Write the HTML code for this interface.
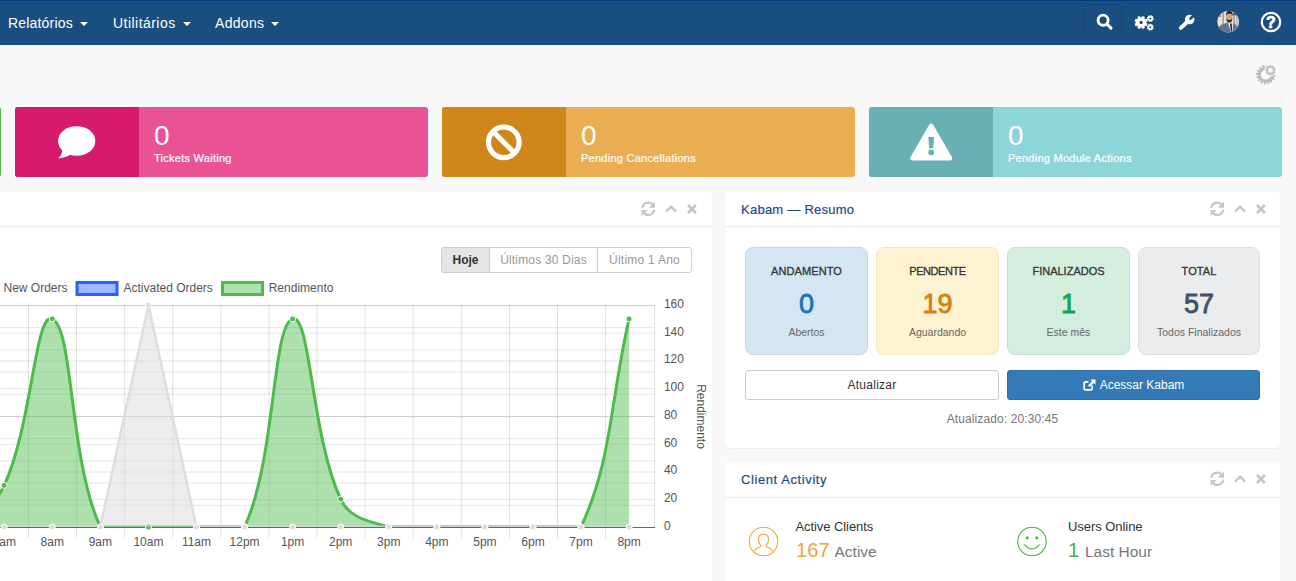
<!DOCTYPE html>
<html lang="pt-BR">
<head>
<meta charset="utf-8">
<title>WHMCS - Dashboard</title>
<style>
*{box-sizing:border-box;margin:0;padding:0}
html,body{width:1296px;height:581px;overflow:hidden;background:#f8f8f8;font-family:"Liberation Sans",sans-serif;color:#333}
.abs{position:absolute}
/* navbar */
.nav{position:absolute;left:0;top:0;width:1296px;height:45px;background:#1a4d80;border-top:1px solid #003d80}
.nav .mi{position:absolute;top:12px;color:#fff;font-size:14px;line-height:20px;white-space:nowrap}
.caret{position:absolute;top:21px;width:0;height:0;border-left:4px solid transparent;border-right:4px solid transparent;border-top:4px solid #fff}
.nav svg{position:absolute}
.sbox{position:absolute;left:1084px;top:4px;width:38px;height:31px;border:1px solid rgba(0,0,0,.07);border-bottom:none}
/* tiles */
.tile{position:absolute;top:107px;height:70px;border-radius:3px;overflow:hidden;color:#fff}
.tile .ic{position:absolute;left:0;top:0;width:124px;height:70px}
.tile .num{position:absolute;left:139px;top:15px;font-size:28px;line-height:28px;white-space:nowrap}
.tile .lab{position:absolute;left:139px;top:44px;font-size:11px;line-height:14px;white-space:nowrap;-webkit-text-stroke:.2px #fff}
.tile svg{position:absolute;left:0;top:0}
/* panels */
.panel{position:absolute;background:#fff;border-radius:4px;box-shadow:0 1px 1px rgba(0,0,0,.05)}
.ph{position:absolute;left:0;right:0;top:0;height:35px;border-bottom:1px solid #ececec}
.ph .t{position:absolute;left:16px;top:9.5px;-webkit-text-stroke:.2px #1a4d80;font-size:13px;line-height:16px;color:#1a4d80;white-space:nowrap}
.ph svg{position:absolute}
/* button group */
.bg{position:absolute;left:441px;top:247px;height:26px;width:251px;font-size:12px}
.bg div{position:absolute;top:0;height:26px;border:1px solid #ccc;background:#fff;color:#999;line-height:24px;text-align:center;white-space:nowrap}
.bg .a{background:#e6e6e6;color:#333;font-weight:bold;border-color:#ccc;border-radius:3px 0 0 3px}
/* kabam boxes */
.kb{position:absolute;top:247px;width:123px;height:108px;border-radius:8px;border:1px solid;text-align:center}
.kb .h{position:absolute;left:0;right:0;top:16px;font-size:11px;line-height:14px;font-weight:normal;-webkit-text-stroke:.3px #333;color:#333;white-space:nowrap}
.kb .n{position:absolute;left:0;right:0;top:41px;font-size:27px;line-height:30px;font-weight:normal;-webkit-text-stroke:.8px;white-space:nowrap}
.kb .s{position:absolute;left:0;right:0;top:76.7px;font-size:10.5px;line-height:14px;color:#666;white-space:nowrap}
.btn{position:absolute;top:370px;height:30px;border-radius:3px;font-size:12px;line-height:28px;text-align:center;border:1px solid #ccc;background:#fff;color:#333;white-space:nowrap}
.btn.p{background:#337ab7;border-color:#2e6da4;color:#fff}
.upd{position:absolute;left:745px;width:515px;top:410.5px;letter-spacing:.11px;text-align:center;font-size:12px;line-height:16px;color:#777;white-space:nowrap}
.ca .l1{position:absolute;font-size:13px;line-height:16px;color:#333;white-space:nowrap}
.ca .l2{position:absolute;font-size:15.5px;line-height:22px;color:#777;white-space:nowrap}
.ca .l2 b{font-weight:normal;font-size:20px;letter-spacing:.1px;margin-right:1.4px}
</style>
</head>
<body>
<!-- NAVBAR -->
<div class="nav">
  <span class="mi" style="left:8px;letter-spacing:.18px">Relatórios</span><i class="caret" style="left:80px"></i>
  <span class="mi" style="left:113px;letter-spacing:.46px">Utilitários</span><i class="caret" style="left:183px"></i>
  <span class="mi" style="left:215px;letter-spacing:.3px">Addons</span><i class="caret" style="left:271px"></i>
  <div class="sbox"></div>
  <!-- search -->
  <svg style="left:1096px;top:11.5px" width="18" height="18" viewBox="0 0 18 18"><circle cx="7.1" cy="7.2" r="5.05" fill="none" stroke="#fff" stroke-width="2.8"/><path d="M10.9 11 L15 15.1" stroke="#fff" stroke-width="3" stroke-linecap="round"/></svg>
  <!-- cogs -->
  <svg style="left:1132px;top:12px" width="24" height="20" viewBox="1132 13 24 20">
    <path d="M1146.19 22.82 L1147.68 23.76 L1146.64 26.27 L1144.93 25.87 L1144.47 26.33 L1144.87 28.04 L1142.36 29.08 L1141.42 27.59 L1140.78 27.59 L1139.84 29.08 L1137.33 28.04 L1137.73 26.33 L1137.27 25.87 L1135.56 26.27 L1134.52 23.76 L1136.01 22.82 L1136.01 22.18 L1134.52 21.24 L1135.56 18.73 L1137.27 19.13 L1137.73 18.67 L1137.33 16.96 L1139.84 15.92 L1140.78 17.41 L1141.42 17.41 L1142.36 15.92 L1144.87 16.96 L1144.47 18.67 L1144.93 19.13 L1146.64 18.73 L1147.68 21.24 L1146.19 22.18Z M1142.80 22.50 A1.70 1.70 0 1 0 1139.40 22.50 A1.70 1.70 0 1 0 1142.80 22.50 Z" fill="#fff" fill-rule="evenodd"/>
    <path d="M1152.88 18.26 L1153.80 18.59 L1153.52 19.98 L1152.54 19.91 L1152.36 20.18 L1152.79 21.06 L1151.60 21.85 L1150.96 21.12 L1150.64 21.18 L1150.31 22.10 L1148.92 21.82 L1148.99 20.84 L1148.72 20.66 L1147.84 21.09 L1147.05 19.90 L1147.78 19.26 L1147.72 18.94 L1146.80 18.61 L1147.08 17.22 L1148.06 17.29 L1148.24 17.02 L1147.81 16.14 L1149.00 15.35 L1149.64 16.08 L1149.96 16.02 L1150.29 15.10 L1151.68 15.38 L1151.61 16.36 L1151.88 16.54 L1152.76 16.11 L1153.55 17.30 L1152.82 17.94Z M1151.30 18.60 A1.00 1.00 0 1 0 1149.30 18.60 A1.00 1.00 0 1 0 1151.30 18.60 Z" fill="#fff" fill-rule="evenodd"/>
    <path d="M1152.88 26.86 L1153.80 27.19 L1153.52 28.58 L1152.54 28.51 L1152.36 28.78 L1152.79 29.66 L1151.60 30.45 L1150.96 29.72 L1150.64 29.78 L1150.31 30.70 L1148.92 30.42 L1148.99 29.44 L1148.72 29.26 L1147.84 29.69 L1147.05 28.50 L1147.78 27.86 L1147.72 27.54 L1146.80 27.21 L1147.08 25.82 L1148.06 25.89 L1148.24 25.62 L1147.81 24.74 L1149.00 23.95 L1149.64 24.68 L1149.96 24.62 L1150.29 23.70 L1151.68 23.98 L1151.61 24.96 L1151.88 25.14 L1152.76 24.71 L1153.55 25.90 L1152.82 26.54Z M1151.30 27.20 A1.00 1.00 0 1 0 1149.30 27.20 A1.00 1.00 0 1 0 1151.30 27.20 Z" fill="#fff" fill-rule="evenodd"/>
  </svg>
  <!-- wrench -->
  <svg style="left:1174px;top:10px" width="24" height="24" viewBox="1174 11 24 24">
    <path d="M1180.9 27.9 L1188.6 20.700" stroke="#fff" stroke-width="4" stroke-linecap="round" fill="none"/>
    <circle cx="1189.700" cy="19.500" r="4.800" fill="#fff"/>
    <path d="M1190.600 18.600 L1195.500 13.700" stroke="#1a4d80" stroke-width="2.800" stroke-linecap="round" fill="none"/>
  </svg>
  <!-- avatar -->
  <svg style="left:1216px;top:9px" width="24" height="24" viewBox="1216 10 24 24">
    <defs><clipPath id="av"><circle cx="1228.200" cy="21.700" r="10.800"/></clipPath></defs>
    <g clip-path="url(#av)">
      <rect x="1216" y="10" width="24" height="24" fill="#e6e3d8"/>
      <rect x="1217" y="10" width="4" height="7" fill="#9a8a62"/>
      <rect x="1222.500" y="10" width="1.200" height="16" fill="#7d8a78"/>
      <rect x="1233" y="10" width="7" height="5.500" fill="#55624f"/>
      <rect x="1233.500" y="15.500" width="1.300" height="12" fill="#8e968c"/>
      <rect x="1236.300" y="14" width="1.300" height="13" fill="#a9aca4"/>
      <ellipse cx="1229.300" cy="17.600" rx="3.100" ry="4" fill="#cfa486"/>
      <path d="M1225.900 16.600 Q1225.600 11 1229.300 10.900 Q1233 11 1232.700 16.600 Q1232 13.600 1229.300 13.600 Q1226.600 13.600 1225.900 16.600Z" fill="#1e1a19"/>
      <path d="M1226.200 18 Q1226.500 22.700 1229.300 22.700 Q1232.100 22.700 1232.400 18 Q1231.500 20.200 1229.300 20 Q1227.100 20.200 1226.200 18Z" fill="#3a2b25"/>
      <path d="M1216 34 L1217.500 28 Q1222 24 1227.500 22.600 L1232 22.600 Q1236.500 24.500 1238.500 28.500 L1240 34Z" fill="#62728f"/>
      <path d="M1228 22.800 L1233 22.800 L1232.800 31.500 L1230.700 31.500Z" fill="#eef0f4"/>
      <path d="M1229.900 23.600 L1231.700 23.600 L1232.300 31 L1231 31.500Z" fill="#1b2748"/>
    </g>
  </svg>
  <!-- help -->
  <svg style="left:1260px;top:10.4px" width="22" height="22" viewBox="0 0 22 22"><circle cx="11" cy="11" r="9.2" fill="none" stroke="#fff" stroke-width="2.3"/><text x="11" y="16.700" text-anchor="middle" font-family="Liberation Sans, sans-serif" font-weight="bold" font-size="16" fill="#fff" stroke="#fff" stroke-width=".7">?</text></svg>
</div>

<!-- page gear -->
<svg class="abs" style="left:1254px;top:62px" width="26" height="26" viewBox="1254 62 26 26">
  <path d="M1273.48 74.11 L1275.60 74.91 L1275.44 76.44 L1273.21 76.80 L1273.12 77.09 L1274.77 78.64 L1274.04 80.00 L1271.84 79.48 L1271.65 79.71 L1272.58 81.78 L1271.39 82.75 L1269.55 81.43 L1269.28 81.57 L1269.36 83.83 L1267.88 84.28 L1266.69 82.35 L1266.39 82.38 L1265.59 84.50 L1264.06 84.34 L1263.70 82.11 L1263.41 82.02 L1261.86 83.67 L1260.50 82.94 L1261.02 80.74 L1260.79 80.55 L1258.72 81.48 L1257.75 80.29 L1259.07 78.45 L1258.93 78.18 L1256.67 78.26 L1256.22 76.78 L1258.15 75.59 L1258.12 75.29 L1256.00 74.49 L1256.16 72.96 L1258.39 72.60 L1258.48 72.31 L1256.83 70.76 L1257.56 69.40 L1259.76 69.92 L1259.95 69.69 L1259.02 67.62 L1260.21 66.65 L1262.05 67.97 L1262.32 67.83 L1262.24 65.57 L1263.72 65.12 L1264.91 67.05 L1265.21 67.02 L1266.01 64.90 L1267.54 65.06 L1267.90 67.29 L1268.19 67.38 L1269.74 65.73 L1271.10 66.46 L1270.58 68.66 L1270.81 68.85 L1272.88 67.92 L1273.85 69.11 L1272.53 70.95 L1272.67 71.22 L1274.93 71.14 L1275.38 72.62 L1273.45 73.81Z M1270.80 74.70 A5.00 5.00 0 1 0 1260.80 74.70 A5.00 5.00 0 1 0 1270.80 74.70 Z" fill="#bcbcbc" fill-rule="evenodd"/>
  <circle cx="1270.5" cy="70.3" r="6.1" fill="#f8f8f8"/>
  <path d="M1274.39 69.37 L1275.77 69.75 L1275.77 70.85 L1274.39 71.23 L1274.34 71.44 L1275.34 72.46 L1274.79 73.42 L1273.40 73.05 L1273.25 73.20 L1273.62 74.59 L1272.66 75.14 L1271.64 74.14 L1271.43 74.19 L1271.05 75.57 L1269.95 75.57 L1269.57 74.19 L1269.36 74.14 L1268.34 75.14 L1267.38 74.59 L1267.75 73.20 L1267.60 73.05 L1266.21 73.42 L1265.66 72.46 L1266.66 71.44 L1266.61 71.23 L1265.23 70.85 L1265.23 69.75 L1266.61 69.37 L1266.66 69.16 L1265.66 68.14 L1266.21 67.18 L1267.60 67.55 L1267.75 67.40 L1267.38 66.01 L1268.34 65.46 L1269.36 66.46 L1269.57 66.41 L1269.95 65.03 L1271.05 65.03 L1271.43 66.41 L1271.64 66.46 L1272.66 65.46 L1273.62 66.01 L1273.25 67.40 L1273.40 67.55 L1274.79 67.18 L1275.34 68.14 L1274.34 69.16Z M1273.00 70.30 A2.50 2.50 0 1 0 1268.00 70.30 A2.50 2.50 0 1 0 1273.00 70.30 Z" fill="#bcbcbc" fill-rule="evenodd"/>
</svg>

<!-- TILES -->
<div class="abs" style="left:-2px;top:107px;width:3px;height:70px;background:#4cbb4c;border-radius:0 3px 3px 0"></div>

<div class="tile" style="left:15px;width:413px;background:#e95395">
  <div class="ic" style="background:#d61a6c"></div>
  <svg width="124" height="70" viewBox="15 107 124 70"><ellipse cx="76.7" cy="141" rx="18.600" ry="14.8" fill="#fff"/><path d="M62 149 Q62.500 155 58.300 158.300 Q65 158.300 70.500 154.500 Z" fill="#fff"/></svg>
  <div class="num">0</div>
  <div class="lab" style="letter-spacing:.26px">Tickets Waiting</div>
</div>

<div class="tile" style="left:442px;width:413px;background:#e9ae52">
  <div class="ic" style="background:#d0871a"></div>
  <svg width="124" height="70" viewBox="442 107 124 70"><circle cx="503.800" cy="142.300" r="15.300" fill="none" stroke="#fff" stroke-width="5.2"/><path d="M493 131.500 L514.600 153.100" stroke="#fff" stroke-width="5" fill="none"/></svg>
  <div class="num">0</div>
  <div class="lab" style="letter-spacing:.26px">Pending Cancellations</div>
</div>

<div class="tile" style="left:869px;width:413px;background:#8ed5d9">
  <div class="ic" style="background:#68b0b4"></div>
  <svg width="124" height="70" viewBox="869 107 124 70"><path d="M931.200 126 L950 158.300 L912.400 158.300 Z" fill="#fff" stroke="#fff" stroke-width="4.600" stroke-linejoin="round"/><path d="M928.400 137 L934 137 L933.300 148.200 L929.100 148.200 Z" fill="#68b0b4"/><circle cx="931.200" cy="152.400" r="2.900" fill="#68b0b4"/></svg>
  <div class="num">0</div>
  <div class="lab" style="letter-spacing:.26px">Pending Module Actions</div>
</div>

<!-- LEFT PANEL (chart) -->
<div class="panel" style="left:-20px;top:192px;width:732px;height:420px">
  <div class="ph">
    <svg style="left:660px;top:8px" width="60" height="20" viewBox="0 0 60 20"><g fill="none" stroke="#c6c6c6" stroke-width="2.2"><path d="M2.3 7.9 A6 6 0 0 1 12.9 4.9"/><path d="M14.3 9.7 A6 6 0 0 1 3.7 12.7"/></g><path d="M15 1.5 V7.7 H8.8 Z" fill="#c6c6c6"/><path d="M1.6 16.1 V9.9 H7.8 Z" fill="#c6c6c6"/><path d="M26.1 11.6 L31.1 6.6 L36.1 11.6" fill="none" stroke="#c6c6c6" stroke-width="2.3"/><path d="M48 5.1 L55.8 12.9 M55.8 5.1 L48 12.9" fill="none" stroke="#c6c6c6" stroke-width="2.8"/></svg>
  </div>
</div>
<div class="bg">
  <div class="a" style="left:0;width:49px">Hoje</div>
  <div style="left:48px;width:109px;letter-spacing:.18px">Últimos 30 Dias</div>
  <div style="left:156px;width:95px;border-radius:0 3px 3px 0;letter-spacing:.25px">Último 1 Ano</div>
</div>
<div class="abs" style="left:0;top:270px;width:712px;height:311px;overflow:hidden">
<svg class="chart" width="712" height="330" viewBox="0 270 712 330" font-family="Liberation Sans, Arial, sans-serif" font-size="12" fill="#555">
<line x1="-5" x2="654.5" y1="305.50" y2="305.50" stroke="rgba(0,0,0,0.1)" stroke-width="1"/>
<line x1="-5" x2="654.5" y1="327.70" y2="327.70" stroke="rgba(0,0,0,0.1)" stroke-width="1"/>
<line x1="-5" x2="654.5" y1="349.90" y2="349.90" stroke="rgba(0,0,0,0.1)" stroke-width="1"/>
<line x1="-5" x2="654.5" y1="372.10" y2="372.10" stroke="rgba(0,0,0,0.1)" stroke-width="1"/>
<line x1="-5" x2="654.5" y1="394.30" y2="394.30" stroke="rgba(0,0,0,0.1)" stroke-width="1"/>
<line x1="-5" x2="654.5" y1="416.50" y2="416.50" stroke="rgba(0,0,0,0.1)" stroke-width="1"/>
<line x1="-5" x2="654.5" y1="438.70" y2="438.70" stroke="rgba(0,0,0,0.1)" stroke-width="1"/>
<line x1="-5" x2="654.5" y1="460.90" y2="460.90" stroke="rgba(0,0,0,0.1)" stroke-width="1"/>
<line x1="-5" x2="654.5" y1="483.10" y2="483.10" stroke="rgba(0,0,0,0.1)" stroke-width="1"/>
<line x1="-5" x2="654.5" y1="505.30" y2="505.30" stroke="rgba(0,0,0,0.1)" stroke-width="1"/>
<line x1="-5" x2="654.5" y1="305.50" y2="305.50" stroke="rgba(0,0,0,0.1)" stroke-width="1"/>
<line x1="-5" x2="654.5" y1="333.25" y2="333.25" stroke="rgba(0,0,0,0.1)" stroke-width="1"/>
<line x1="-5" x2="654.5" y1="361.00" y2="361.00" stroke="rgba(0,0,0,0.1)" stroke-width="1"/>
<line x1="-5" x2="654.5" y1="388.75" y2="388.75" stroke="rgba(0,0,0,0.1)" stroke-width="1"/>
<line x1="-5" x2="654.5" y1="416.50" y2="416.50" stroke="rgba(0,0,0,0.1)" stroke-width="1"/>
<line x1="-5" x2="654.5" y1="444.25" y2="444.25" stroke="rgba(0,0,0,0.1)" stroke-width="1"/>
<line x1="-5" x2="654.5" y1="472.00" y2="472.00" stroke="rgba(0,0,0,0.1)" stroke-width="1"/>
<line x1="-5" x2="654.5" y1="499.75" y2="499.75" stroke="rgba(0,0,0,0.1)" stroke-width="1"/>
<line x1="28.5" x2="28.5" y1="305.0" y2="538.0" stroke="rgba(0,0,0,0.12)" stroke-width="1"/>
<line x1="76.6" x2="76.6" y1="305.0" y2="538.0" stroke="rgba(0,0,0,0.12)" stroke-width="1"/>
<line x1="124.7" x2="124.7" y1="305.0" y2="538.0" stroke="rgba(0,0,0,0.12)" stroke-width="1"/>
<line x1="172.8" x2="172.8" y1="305.0" y2="538.0" stroke="rgba(0,0,0,0.12)" stroke-width="1"/>
<line x1="220.9" x2="220.9" y1="305.0" y2="538.0" stroke="rgba(0,0,0,0.12)" stroke-width="1"/>
<line x1="269.0" x2="269.0" y1="305.0" y2="538.0" stroke="rgba(0,0,0,0.12)" stroke-width="1"/>
<line x1="317.0" x2="317.0" y1="305.0" y2="538.0" stroke="rgba(0,0,0,0.12)" stroke-width="1"/>
<line x1="365.1" x2="365.1" y1="305.0" y2="538.0" stroke="rgba(0,0,0,0.12)" stroke-width="1"/>
<line x1="413.2" x2="413.2" y1="305.0" y2="538.0" stroke="rgba(0,0,0,0.12)" stroke-width="1"/>
<line x1="461.3" x2="461.3" y1="305.0" y2="538.0" stroke="rgba(0,0,0,0.12)" stroke-width="1"/>
<line x1="509.4" x2="509.4" y1="305.0" y2="538.0" stroke="rgba(0,0,0,0.12)" stroke-width="1"/>
<line x1="557.5" x2="557.5" y1="305.0" y2="538.0" stroke="rgba(0,0,0,0.12)" stroke-width="1"/>
<line x1="605.6" x2="605.6" y1="305.0" y2="538.0" stroke="rgba(0,0,0,0.12)" stroke-width="1"/>
<line x1="654.5" x2="654.5" y1="305.0" y2="528.0" stroke="rgba(0,0,0,0.1)" stroke-width="1"/>
<line x1="-5" x2="655.0" y1="527.5" y2="527.5" stroke="#666" stroke-width="1"/>
<clipPath id="ca"><rect x="-10" y="303.0" width="664.5" height="224.0"/></clipPath>
<g clip-path="url(#ca)">
<path d="M-91.94 527.00 C-72.71 527.00 -60.43 527.00 -43.87 527.00 C-21.97 517.52 -6.12 507.72 4.20 485.38 C32.33 424.47 35.04 311.42 52.27 318.88 C73.50 328.07 68.95 459.04 100.34 527.00 C107.40 527.00 129.18 527.00 148.41 527.00 C167.64 527.00 177.25 527.00 196.48 527.00 C215.71 527.00 237.49 527.00 244.55 527.00 C275.94 459.04 272.10 324.80 292.62 318.88 C310.55 313.70 311.05 435.08 340.69 499.25 C349.50 518.33 368.15 521.05 388.76 527.00 C406.61 527.00 417.60 527.00 436.83 527.00 C456.06 527.00 465.67 527.00 484.90 527.00 C504.13 527.00 513.74 527.00 532.97 527.00 C552.20 527.00 573.98 527.00 581.04 527.00 C612.43 459.04 609.88 402.12 629.11 318.88 L629.11 527.00 L-91.94 527.00 Z" fill="rgba(76,187,76,0.45)"/>
<path d="M-91.94 527.00 C-72.71 527.00 -60.43 527.00 -43.87 527.00 C-21.97 517.52 -6.12 507.72 4.20 485.38 C32.33 424.47 35.04 311.42 52.27 318.88 C73.50 328.07 68.95 459.04 100.34 527.00 C107.40 527.00 129.18 527.00 148.41 527.00 C167.64 527.00 177.25 527.00 196.48 527.00 C215.71 527.00 237.49 527.00 244.55 527.00 C275.94 459.04 272.10 324.80 292.62 318.88 C310.55 313.70 311.05 435.08 340.69 499.25 C349.50 518.33 368.15 521.05 388.76 527.00 C406.61 527.00 417.60 527.00 436.83 527.00 C456.06 527.00 465.67 527.00 484.90 527.00 C504.13 527.00 513.74 527.00 532.97 527.00 C552.20 527.00 573.98 527.00 581.04 527.00 C612.43 459.04 609.88 402.12 629.11 318.88" fill="none" stroke="#4cbb4c" stroke-width="3" stroke-linejoin="round"/>
</g>
<circle cx="-91.94" cy="527.00" r="3" fill="#4cbb4c" stroke="#fff" stroke-width="1"/>
<circle cx="-43.87" cy="527.00" r="3" fill="#4cbb4c" stroke="#fff" stroke-width="1"/>
<circle cx="4.20" cy="485.38" r="3" fill="#4cbb4c" stroke="#fff" stroke-width="1"/>
<circle cx="52.27" cy="318.88" r="3" fill="#4cbb4c" stroke="#fff" stroke-width="1"/>
<circle cx="100.34" cy="527.00" r="3" fill="#4cbb4c" stroke="#fff" stroke-width="1"/>
<circle cx="148.41" cy="527.00" r="3" fill="#4cbb4c" stroke="#fff" stroke-width="1"/>
<circle cx="196.48" cy="527.00" r="3" fill="#4cbb4c" stroke="#fff" stroke-width="1"/>
<circle cx="244.55" cy="527.00" r="3" fill="#4cbb4c" stroke="#fff" stroke-width="1"/>
<circle cx="292.62" cy="318.88" r="3" fill="#4cbb4c" stroke="#fff" stroke-width="1"/>
<circle cx="340.69" cy="499.25" r="3" fill="#4cbb4c" stroke="#fff" stroke-width="1"/>
<circle cx="388.76" cy="527.00" r="3" fill="#4cbb4c" stroke="#fff" stroke-width="1"/>
<circle cx="436.83" cy="527.00" r="3" fill="#4cbb4c" stroke="#fff" stroke-width="1"/>
<circle cx="484.90" cy="527.00" r="3" fill="#4cbb4c" stroke="#fff" stroke-width="1"/>
<circle cx="532.97" cy="527.00" r="3" fill="#4cbb4c" stroke="#fff" stroke-width="1"/>
<circle cx="581.04" cy="527.00" r="3" fill="#4cbb4c" stroke="#fff" stroke-width="1"/>
<circle cx="629.11" cy="318.88" r="3" fill="#4cbb4c" stroke="#fff" stroke-width="1"/>
<g clip-path="url(#ca)">
<path d="M-91.94 527.00 L-43.87 527.00 L4.20 527.00 L52.27 527.00 L100.34 527.00 L148.41 305.00 L196.48 527.00 L244.55 527.00 L292.62 527.00 L340.69 527.00 L388.76 527.00 L436.83 527.00 L484.90 527.00 L532.97 527.00 L581.04 527.00 L629.11 527.00 L629.11 527.00 L-91.94 527.00 Z" fill="rgba(220,220,220,0.5)"/>
<path d="M-91.94 527.00 L-43.87 527.00 L4.20 527.00 L52.27 527.00 L100.34 527.00 L148.41 305.00 L196.48 527.00 L244.55 527.00 L292.62 527.00 L340.69 527.00 L388.76 527.00 L436.83 527.00 L484.90 527.00 L532.97 527.00 L581.04 527.00 L629.11 527.00" fill="none" stroke="rgba(218,218,218,0.85)" stroke-width="2.6" stroke-linejoin="miter"/>
</g>
<circle cx="-91.94" cy="527.00" r="3" fill="#ddd" stroke="#fff" stroke-width="1"/>
<circle cx="-43.87" cy="527.00" r="3" fill="#ddd" stroke="#fff" stroke-width="1"/>
<circle cx="4.20" cy="527.00" r="3" fill="#ddd" stroke="#fff" stroke-width="1"/>
<circle cx="52.27" cy="527.00" r="3" fill="#ddd" stroke="#fff" stroke-width="1"/>
<circle cx="100.34" cy="527.00" r="3" fill="#ddd" stroke="#fff" stroke-width="1"/>
<circle cx="148.41" cy="305.00" r="3" fill="#ddd" stroke="#fff" stroke-width="1"/>
<circle cx="196.48" cy="527.00" r="3" fill="#ddd" stroke="#fff" stroke-width="1"/>
<circle cx="244.55" cy="527.00" r="3" fill="#ddd" stroke="#fff" stroke-width="1"/>
<circle cx="292.62" cy="527.00" r="3" fill="#ddd" stroke="#fff" stroke-width="1"/>
<circle cx="340.69" cy="527.00" r="3" fill="#ddd" stroke="#fff" stroke-width="1"/>
<circle cx="388.76" cy="527.00" r="3" fill="#ddd" stroke="#fff" stroke-width="1"/>
<circle cx="436.83" cy="527.00" r="3" fill="#ddd" stroke="#fff" stroke-width="1"/>
<circle cx="484.90" cy="527.00" r="3" fill="#ddd" stroke="#fff" stroke-width="1"/>
<circle cx="532.97" cy="527.00" r="3" fill="#ddd" stroke="#fff" stroke-width="1"/>
<circle cx="581.04" cy="527.00" r="3" fill="#ddd" stroke="#fff" stroke-width="1"/>
<circle cx="629.11" cy="527.00" r="3" fill="#ddd" stroke="#fff" stroke-width="1"/>
<text x="4.20" y="546" text-anchor="middle">7am</text>
<text x="52.27" y="546" text-anchor="middle">8am</text>
<text x="100.34" y="546" text-anchor="middle">9am</text>
<text x="148.41" y="546" text-anchor="middle">10am</text>
<text x="196.48" y="546" text-anchor="middle">11am</text>
<text x="244.55" y="546" text-anchor="middle">12pm</text>
<text x="292.62" y="546" text-anchor="middle">1pm</text>
<text x="340.69" y="546" text-anchor="middle">2pm</text>
<text x="388.76" y="546" text-anchor="middle">3pm</text>
<text x="436.83" y="546" text-anchor="middle">4pm</text>
<text x="484.90" y="546" text-anchor="middle">5pm</text>
<text x="532.97" y="546" text-anchor="middle">6pm</text>
<text x="581.04" y="546" text-anchor="middle">7pm</text>
<text x="629.11" y="546" text-anchor="middle">8pm</text>
<text x="663.9" y="307.80">160</text>
<text x="663.9" y="335.55">140</text>
<text x="663.9" y="363.30">120</text>
<text x="663.9" y="391.05">100</text>
<text x="663.9" y="418.80">80</text>
<text x="663.9" y="446.55">60</text>
<text x="663.9" y="474.30">40</text>
<text x="663.9" y="502.05">20</text>
<text x="663.9" y="529.80">0</text>
<text transform="translate(696.5 416.5) rotate(90)" text-anchor="middle">Rendimento</text>
<rect x="-44.5" y="282.5" width="40" height="12" fill="rgba(220,220,220,0.5)" stroke="#ddd" stroke-width="3"/>
<text x="3.5" y="292.3">New Orders</text>
<rect x="77" y="282.5" width="40" height="12" fill="rgba(41,98,255,0.45)" stroke="#2962ff" stroke-width="3"/>
<text x="123.5" y="292.3">Activated Orders</text>
<rect x="222.5" y="282.5" width="40" height="12" fill="rgba(76,187,76,0.45)" stroke="#4cbb4c" stroke-width="3"/>
<text x="268.7" y="292.3">Rendimento</text>
</svg>
</div>

<!-- RIGHT PANEL 1 -->
<div class="panel" style="left:725px;top:192px;width:555px;height:256px">
  <div class="ph"><span class="t" style="letter-spacing:.25px">Kabam — Resumo</span>
    <svg style="left:484px;top:8px" width="60" height="20" viewBox="0 0 60 20"><g fill="none" stroke="#c6c6c6" stroke-width="2.2"><path d="M2.3 7.9 A6 6 0 0 1 12.9 4.9"/><path d="M14.3 9.7 A6 6 0 0 1 3.7 12.7"/></g><path d="M15 1.5 V7.7 H8.8 Z" fill="#c6c6c6"/><path d="M1.6 16.1 V9.9 H7.8 Z" fill="#c6c6c6"/><path d="M26.1 11.6 L31.1 6.6 L36.1 11.6" fill="none" stroke="#c6c6c6" stroke-width="2.3"/><path d="M48 5.1 L55.8 12.9 M55.8 5.1 L48 12.9" fill="none" stroke="#c6c6c6" stroke-width="2.8"/></svg>
  </div>
</div>
<div class="kb" style="left:745px;background:#d5e6f3;border-color:#c3d9ea"><div class="h" style="letter-spacing:.1px">ANDAMENTO</div><div class="n" style="color:#1b75bb">0</div><div class="s">Abertos</div></div>
<div class="kb" style="left:876px;background:#fdf3d1;border-color:#f6e7b4"><div class="h" style="letter-spacing:-.45px">PENDENTE</div><div class="n" style="color:#d5810f">19</div><div class="s">Aguardando</div></div>
<div class="kb" style="left:1007px;background:#d3eede;border-color:#c0e3ce"><div class="h" style="letter-spacing:0px">FINALIZADOS</div><div class="n" style="color:#12a650">1</div><div class="s">Este mês</div></div>
<div class="kb" style="left:1138px;width:122px;background:#ebecee;border-color:#dddfe2"><div class="h" style="letter-spacing:.1px">TOTAL</div><div class="n" style="color:#3d5166">57</div><div class="s">Todos Finalizados</div></div>
<div class="btn" style="left:745px;width:254px;letter-spacing:.25px">Atualizar</div>
<div class="btn p" style="left:1007px;width:253px"><svg width="13" height="12" viewBox="0 0 13 12" style="vertical-align:-1.5px;margin-right:4px"><path d="M9.2 6.600 V9.400 Q9.2 10.800 7.800 10.800 H2.600 Q1.200 10.800 1.200 9.400 V4.200 Q1.200 2.800 2.600 2.800 H5.400" fill="none" stroke="#fff" stroke-width="1.700"/><path d="M7.300 0.500 H12.500 V5.700 L10.700 3.900 L6.600 8 L5 6.400 L9.100 2.300 Z" fill="#fff"/></svg>Acessar Kabam</div>
<div class="upd">Atualizado: 20:30:45</div>

<!-- RIGHT PANEL 2 -->
<div class="panel ca" style="left:725px;top:462px;width:555px;height:140px">
  <div class="ph" style="height:36px"><span class="t" style="letter-spacing:.59px;top:10px">Client Activity</span>
    <svg style="left:484px;top:8px" width="60" height="20" viewBox="0 0 60 20"><g fill="none" stroke="#c6c6c6" stroke-width="2.2"><path d="M2.3 7.9 A6 6 0 0 1 12.9 4.9"/><path d="M14.3 9.7 A6 6 0 0 1 3.7 12.7"/></g><path d="M15 1.5 V7.7 H8.8 Z" fill="#c6c6c6"/><path d="M1.6 16.1 V9.9 H7.8 Z" fill="#c6c6c6"/><path d="M26.1 11.6 L31.1 6.6 L36.1 11.6" fill="none" stroke="#c6c6c6" stroke-width="2.3"/><path d="M48 5.1 L55.8 12.9 M55.8 5.1 L48 12.9" fill="none" stroke="#c6c6c6" stroke-width="2.8"/></svg>
  </div>
  <svg class="abs" style="left:23px;top:64px" width="32" height="32" viewBox="0 0 32 32"><circle cx="15.5" cy="15.500" r="14.200" fill="none" stroke="#f0a440" stroke-width="1.1"/><path d="M6.500 25.500 Q7 22.500 11.500 21.300 Q13 20.700 12.600 19.300 Q10.300 16.500 10.500 12.500 Q10.800 8.300 15.500 8.200 Q20.200 8.300 20.500 12.500 Q20.700 16.500 18.400 19.300 Q18 20.700 19.500 21.300 Q24 22.500 24.500 25.500" fill="none" stroke="#f0a440" stroke-width="1.1"/></svg>
  <div class="l1" style="left:70.5px;top:56.5px;letter-spacing:-.08px">Active Clients</div>
  <div class="l2" style="left:71px;top:77px;color:#777"><b style="color:#f0a440">167</b> Active</div>
  <svg class="abs" style="left:291px;top:64px" width="32" height="32" viewBox="0 0 32 32"><circle cx="16" cy="15.500" r="14.200" fill="none" stroke="#3fb93f" stroke-width="1.1"/><circle cx="11.300" cy="11.800" r="1.500" fill="#3fb93f"/><circle cx="20.700" cy="11.800" r="1.500" fill="#3fb93f"/><path d="M8.800 18.800 Q16 27 23.200 18.800" fill="none" stroke="#3fb93f" stroke-width="1.2" stroke-linecap="round"/></svg>
  <div class="l1" style="left:343px;top:56.5px;letter-spacing:-.05px">Users Online</div>
  <div class="l2" style="left:343px;top:77px"><b style="color:#3fb93f">1</b> Last Hour</div>
</div>
</body>
</html>
